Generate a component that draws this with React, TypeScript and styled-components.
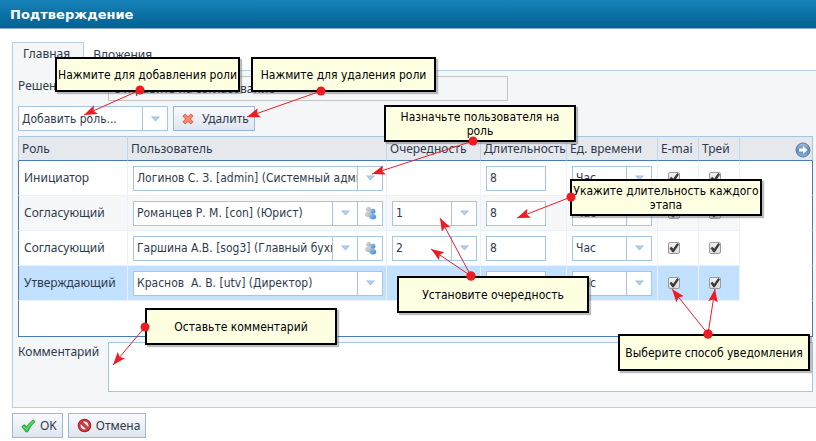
import React from 'react';
import styled, { createGlobalStyle, css } from 'styled-components';

const uiFont = '"Noto Sans", "DejaVu Sans", sans-serif';
const noteFont = '"DejaVu Sans Condensed", "DejaVu Sans", sans-serif';

const color = {
  text: '#2f3b4c',
  line: '#a6c6e2',
  strong: '#4a7ab2',
  panel: '#f5f6f8',
  head: '#e5e8ed',
  soft: '#e9f1fa',
  selected: '#c2e0ff',
};

const GlobalStyle = createGlobalStyle`
  *, *::before, *::after { box-sizing: border-box; }
  body { margin: 0; background: #fff; overflow: hidden; }
  body, button, input, select, textarea {
    font: 12px/16px ${uiFont};
    color: ${color.text};
  }
`;

const Page = styled.div`
  position: relative;
`;

const TitleBar = styled.header`
  display: flex;
  align-items: center;
  height: 29px;
  padding: 1px 0 0 10px;
  background: linear-gradient(#1682b9, #036292);
  border-bottom: 1px solid #8aadd3;
`;

const Title = styled.h1`
  margin: 0;
  font: bold 13px/16px "DejaVu Sans", sans-serif;
  color: #fff;
`;

const Body = styled.form`
  padding: 13px 0 3px 12px;
`;

const Tabs = styled.div`
  display: flex;
`;

const Tab = styled.button<{ $active?: boolean }>`
  height: 29px;
  margin: 0 0 -1px;
  border: 1px solid transparent;
  border-bottom: 0;
  background: transparent;
  ${p => p.$active ? css`
    z-index: 1;
    padding: 0 13px 7px 10px;
    border-color: #b5cfe4;
    background: ${color.panel};
  ` : css`
    padding: 0 8px 4px;
  `}
`;

const Panel = styled.section`
  display: flex;
  flex-direction: column;
  gap: 5px;
  padding: 5px 3px 15px 5px;
  border: solid #b5cfe4;
  border-width: 1px 0 1px 1px;
  background: ${color.panel};
`;

const Field = styled.div`
  display: flex;
  align-items: flex-start;
`;

const FieldLabel = styled.label`
  flex: 0 0 90px;
  padding-top: 2px;
`;

const Decision = styled.input`
  width: 400px;
  height: 25px;
  padding: 0 4px;
  border: 1px solid #c2c4c8;
  background: ${color.panel};
  outline: 0;
`;

const Comment = styled.textarea`
  flex: 1;
  height: 50px;
  padding: 3px;
  border: 1px solid ${color.line};
  background: #fff;
  outline: 0;
  resize: none;
`;

const Toolbar = styled.div`
  display: flex;
  gap: 5px;
`;

const Button = styled.button<{ $spaced?: boolean }>`
  display: flex;
  align-items: center;
  gap: ${p => (p.$spaced ? 8 : 4)}px;
  height: 25px;
  padding: 0 5px 0 8px;
  border: 1px solid #9cb6d6;
  background: linear-gradient(#f8fafc, #dfe5ef);
`;

const Footer = styled.footer`
  display: flex;
  gap: 5px;
  padding-top: 5px;
`;

const ComboBox = styled.div<{ $width: number }>`
  display: flex;
  width: ${p => p.$width}px;
  height: 25px;
  border: 1px solid ${color.line};
  background: #fff;
`;

const ComboSelect = styled.select`
  flex: 1;
  min-width: 0;
  padding: 0 0 0 3px;
  border: 0;
  background: #fff;
  appearance: none;
  outline: 0;
  font-family: ${noteFont};
  text-overflow: clip;
  white-space: pre;
`;

const Trigger = styled.span`
  display: grid;
  place-items: center;
  flex: 0 0 25px;
  border-left: 1px solid ${color.line};
  pointer-events: none;
`;

const UsersButton = styled.button`
  display: grid;
  place-items: center;
  flex: 0 0 25px;
  padding: 0;
  border: 0;
  border-left: 1px solid ${color.line};
  background: #fff;
`;

const NumberBox = styled.input`
  display: block;
  width: 60px;
  height: 25px;
  padding: 0 3px;
  border: 1px solid ${color.line};
  background: #fff;
  outline: 0;
  font-family: ${noteFont};
`;

const Check = styled.input`
  display: grid;
  place-items: center;
  width: 12px;
  height: 12px;
  margin: 0 0 0 5px;
  border: 1px solid #9b9b9b;
  border-radius: 2px;
  background: linear-gradient(#f2f2f2, #dcdcdc);
  appearance: none;
  &:checked::after {
    content: '';
    width: 10px;
    height: 10px;
    background: #3c3c3c;
    clip-path: polygon(5% 52%, 24% 38%, 42% 58%, 82% 0, 100% 14%, 48% 92%, 34% 92%);
  }
`;

const Grid = styled.table`
  width: 100%;
  table-layout: fixed;
  border-spacing: 0;
`;

const Col = styled.col<{ $width?: number }>`
  width: ${p => (p.$width ? `${p.$width}px` : 'auto')};
`;

const HeadCell = styled.th`
  height: 25px;
  padding: 0 3px;
  border: 0 solid ${color.line};
  border-top-width: 1px;
  border-bottom: 1px solid ${color.strong};
  border-right: 1px solid #bfd8ee;
  background: ${color.head};
  font-weight: normal;
  text-align: left;
  white-space: nowrap;
  overflow: hidden;
  &:first-child { border-left-width: 1px; }
  &:last-child { border-right-color: ${color.line}; padding: 0 1px; }
`;

const RoundButton = styled.button`
  display: block;
  width: 16px;
  height: 16px;
  margin: 2px 0 0 auto;
  padding: 0;
  border: 0;
  background: none;
`;

const Row = styled.tr<{ $tone: string }>`
  td:not(:last-child) { background: ${p => p.$tone}; }
`;

const Cell = styled.td`
  height: 35px;
  padding: 0 5px;
  border: 0 solid ${color.soft};
  border-width: 0 1px 1px 0;
  background: #fff;
  &:first-child { border-left: 1px solid ${color.strong}; }
  &:last-child { border-right-color: ${color.strong}; border-bottom-color: #fff; }
`;

const EmptyCell = styled.td`
  height: 36px;
  padding: 0;
  border: solid ${color.strong};
  border-width: 0 1px 1px;
  background: #fff;
`;

const Arrows = styled.svg`
  position: absolute;
  z-index: 3;
  top: 0;
  left: 0;
  pointer-events: none;
`;

const Callout = styled.aside<{ $x: number; $y: number; $small?: boolean }>`
  position: absolute;
  z-index: 2;
  left: ${p => p.$x}px;
  top: ${p => p.$y}px;
  display: flex;
  align-items: center;
  justify-content: center;
  width: ${p => (p.$small ? 185 : 192)}px;
  min-height: ${p => (p.$small ? 35 : 37)}px;
  border: 2px solid #000;
  background: #ffffe1;
  box-shadow: 2px 2px 1px rgba(90, 90, 90, 0.4);
  color: #000;
  font-family: ${noteFont};
  line-height: 14px;
  text-align: center;
`;

const Triangle = () => (
  <svg width="9" height="6" viewBox="0 0 9 6" aria-hidden="true">
    <path d="M0 .5h9L4.5 5.5z" fill="#9dbddf" />
    <path d="M2 1.5h5L4.5 4.2z" fill="#b9d2ed" />
  </svg>
);

const UsersIcon = () => (
  <svg width="13" height="14" viewBox="0 0 13 14" aria-hidden="true">
    <defs>
      <linearGradient id="person" x1="0" y1="0" x2="1" y2="1">
        <stop offset="0" stopColor="#9fcaf3" /><stop offset="1" stopColor="#3f83cf" />
      </linearGradient>
      <linearGradient id="shade" x1="0" y1="0" x2="1" y2="1">
        <stop offset="0" stopColor="#dedede" /><stop offset="1" stopColor="#a9adb2" />
      </linearGradient>
    </defs>
    <circle cx="4.5" cy="3.2" r="2.5" fill="url(#shade)" />
    <path d="M1 8.5C1 6.5 2.3 5.4 4.3 5.4S8 6.6 8 9.2L7 11C4 11.5 1 10.7 1 8.5z" fill="url(#shade)" />
    <circle cx="8.8" cy="5.2" r="2.6" fill="url(#person)" />
    <path d="M5.3 11C5.3 8.8 6.8 7.7 8.8 7.7s3.4 1.3 3.4 3.4c0 1.6-1.5 2.3-3.3 2.3S5.3 12.6 5.3 11z" fill="url(#person)" />
  </svg>
);

const DeleteIcon = () => (
  <svg width="12" height="12" viewBox="0 0 12 12" aria-hidden="true">
    <path d="M3.2 1 6 3.8 8.8 1 11 3.2 8.3 6 11 8.8 8.8 11 6 8.3 3.2 11 1 8.8 3.7 6 1 3.2z"
      fill="#f98a70" stroke="#dc5640" strokeWidth="1" strokeLinejoin="round" />
  </svg>
);

const OkIcon = () => (
  <svg width="15" height="14" viewBox="0 0 15 14" aria-hidden="true">
    <path d="M.8 7.6 3.3 5.6 5.7 7.8C7.3 5 9.6 2.6 12.4.9l1.8 1.7C11 5 8.8 8.4 7 12.6L5 13z"
      fill="#3cc44c" stroke="#1f9a35" strokeWidth=".8" strokeLinejoin="round" />
    <path d="M2.3 7.4 5.7 10.4C7.3 6.9 9.5 4.3 12.6 2.2" fill="none" stroke="#7be27f" strokeWidth=".8" />
  </svg>
);

const CancelIcon = () => (
  <svg width="15" height="15" viewBox="0 0 15 15" aria-hidden="true">
    <circle cx="7.5" cy="7.5" r="6.8" fill="#a81c20" />
    <circle cx="7.5" cy="7.5" r="5.8" fill="#cf4245" />
    <circle cx="7.5" cy="7.5" r="4.4" fill="#f3e4e4" stroke="#a3191d" strokeWidth=".6" />
    <path d="m4.2 4.2 6.6 6.6" stroke="#a3191d" strokeWidth="3" />
    <path d="m3.8 3.8 7.4 7.4" stroke="#cf4245" strokeWidth="2" />
  </svg>
);

const NextIcon = () => (
  <svg width="16" height="16" viewBox="0 0 16 16" aria-hidden="true">
    <defs>
      <linearGradient id="ball" x1="0" y1="0" x2="0" y2="1">
        <stop offset="0" stopColor="#a9c1dc" /><stop offset=".5" stopColor="#5f8ab8" /><stop offset="1" stopColor="#86b4dd" />
      </linearGradient>
    </defs>
    <circle cx="8" cy="8" r="7" fill="url(#ball)" stroke="#5d7896" />
    <path d="M4 6.5h4V4l4.5 4L8 12V9.5H4z" fill="#fff" />
  </svg>
);

type ComboProps = { label: string; value: string; width: number; users?: boolean };

const Combo = ({ label, value, width, users }: ComboProps) => (
  <ComboBox $width={width}>
    <ComboSelect aria-label={label}>
      <option>{value}</option>
    </ComboSelect>
    <Trigger><Triangle /></Trigger>
    {users && <UsersButton type="button" aria-label="Выбрать пользователя"><UsersIcon /></UsersButton>}
  </ComboBox>
);

const columns = [
  { title: 'Роль', width: 110 },
  { title: 'Пользователь', width: 259 },
  { title: 'Очередность', width: 94 },
  { title: 'Длительность', width: 86 },
  { title: 'Ед. времени', width: 91 },
  { title: 'E-mai', width: 41 },
  { title: 'Трей', width: 41 },
];

const rows = [
  { role: 'Инициатор', user: 'Логинов С. З. [admin] (Системный администратор)', tone: '#fff' },
  { role: 'Согласующий', user: 'Романцев Р. М. [con] (Юрист)', users: true, order: '1', tone: '#f6f7f9' },
  { role: 'Согласующий', user: 'Гаршина А.В. [sog3] (Главный бухгалтер)', users: true, order: '2', tone: '#fff' },
  { role: 'Утверждающий', user: 'Краснов\u00a0 А. В. [utv] (Директор)', tone: color.selected },
];

const callouts = [
  { x: 55, y: 57, small: true, text: 'Нажмите для добавления роли' },
  { x: 251, y: 57, small: true, text: 'Нажмите для удаления роли' },
  { x: 384, y: 105, text: 'Назначьте пользователя на роль' },
  { x: 570, y: 179, text: 'Укажите длительность каждого этапа' },
  { x: 397, y: 276, text: 'Установите очередность' },
  { x: 145, y: 308, text: 'Оставьте комментарий' },
  { x: 618, y: 334, text: 'Выберите способ уведомления' },
];

const arrows = [
  [140, 90, 84, 115],
  [321, 91, 247, 117],
  [473, 141, 372, 174],
  [571, 197, 517, 218],
  [471, 276, 440, 218],
  [471, 276, 431, 249],
  [145, 327, 113, 365],
  [708, 334, 672, 289],
  [708, 334, 715, 289],
];

export default function App() {
  return (
    <Page>
      <GlobalStyle />
      <TitleBar><Title>Подтверждение</Title></TitleBar>
      <Body onSubmit={e => e.preventDefault()}>
        <Tabs role="tablist">
          <Tab type="button" role="tab" aria-selected="true" $active>Главная</Tab>
          <Tab type="button" role="tab" aria-selected="false">Вложения</Tab>
        </Tabs>
        <Panel>
          <Field>
            <FieldLabel htmlFor="decision">Решение</FieldLabel>
            <Decision id="decision" readOnly value="Отправить на согласование" />
          </Field>
          <Toolbar>
            <Combo label="Добавить роль" value="Добавить роль..." width={150} />
            <Button type="button" $spaced><DeleteIcon />Удалить</Button>
          </Toolbar>
          <Grid>
            <colgroup>
              {columns.map(c => <Col key={c.title} $width={c.width} />)}
              <Col />
            </colgroup>
            <thead>
              <tr>
                {columns.map(c => <HeadCell key={c.title} scope="col">{c.title}</HeadCell>)}
                <HeadCell><RoundButton type="button" aria-label="Далее"><NextIcon /></RoundButton></HeadCell>
              </tr>
            </thead>
            <tbody>
              {rows.map((r, i) => (
                <Row key={i} $tone={r.tone}>
                  <Cell>{r.role}</Cell>
                  <Cell><Combo label="Пользователь" value={r.user} width={250} users={r.users} /></Cell>
                  <Cell>{r.order && <Combo label="Очередность" value={r.order} width={85} />}</Cell>
                  <Cell><NumberBox aria-label="Длительность" defaultValue="8" /></Cell>
                  <Cell><Combo label="Единица времени" value="Час" width={80} /></Cell>
                  <Cell><Check type="checkbox" aria-label="E-mail" defaultChecked /></Cell>
                  <Cell><Check type="checkbox" aria-label="Трей" defaultChecked /></Cell>
                  <Cell />
                </Row>
              ))}
              <tr><EmptyCell colSpan={8} /></tr>
            </tbody>
          </Grid>
          <Field>
            <FieldLabel htmlFor="comment">Комментарий</FieldLabel>
            <Comment id="comment" />
          </Field>
        </Panel>
        <Footer>
          <Button type="submit"><OkIcon />OK</Button>
          <Button type="button"><CancelIcon />Отмена</Button>
        </Footer>
      </Body>
      {callouts.map(c => <Callout key={c.text} $x={c.x} $y={c.y} $small={c.small}>{c.text}</Callout>)}
      <Arrows width="816" height="441" viewBox="0 0 816 441" aria-hidden="true">
        <defs>
          <marker id="tip" markerUnits="userSpaceOnUse" markerWidth="14" markerHeight="12" refX="13" refY="6" orient="auto">
            <path d="M13 6 0 1.2 2.5 6 0 10.8z" fill="#ed1c24" />
          </marker>
        </defs>
        {arrows.map(([x1, y1, x2, y2]) => (
          <g key={`${x2}-${y2}`}>
            <line x1={x1} y1={y1} x2={x2} y2={y2} stroke="#ed1c24" strokeWidth="1" markerEnd="url(#tip)" />
            <circle cx={x1} cy={y1} r="4.5" fill="#ed1c24" />
          </g>
        ))}
      </Arrows>
    </Page>
  );
}
